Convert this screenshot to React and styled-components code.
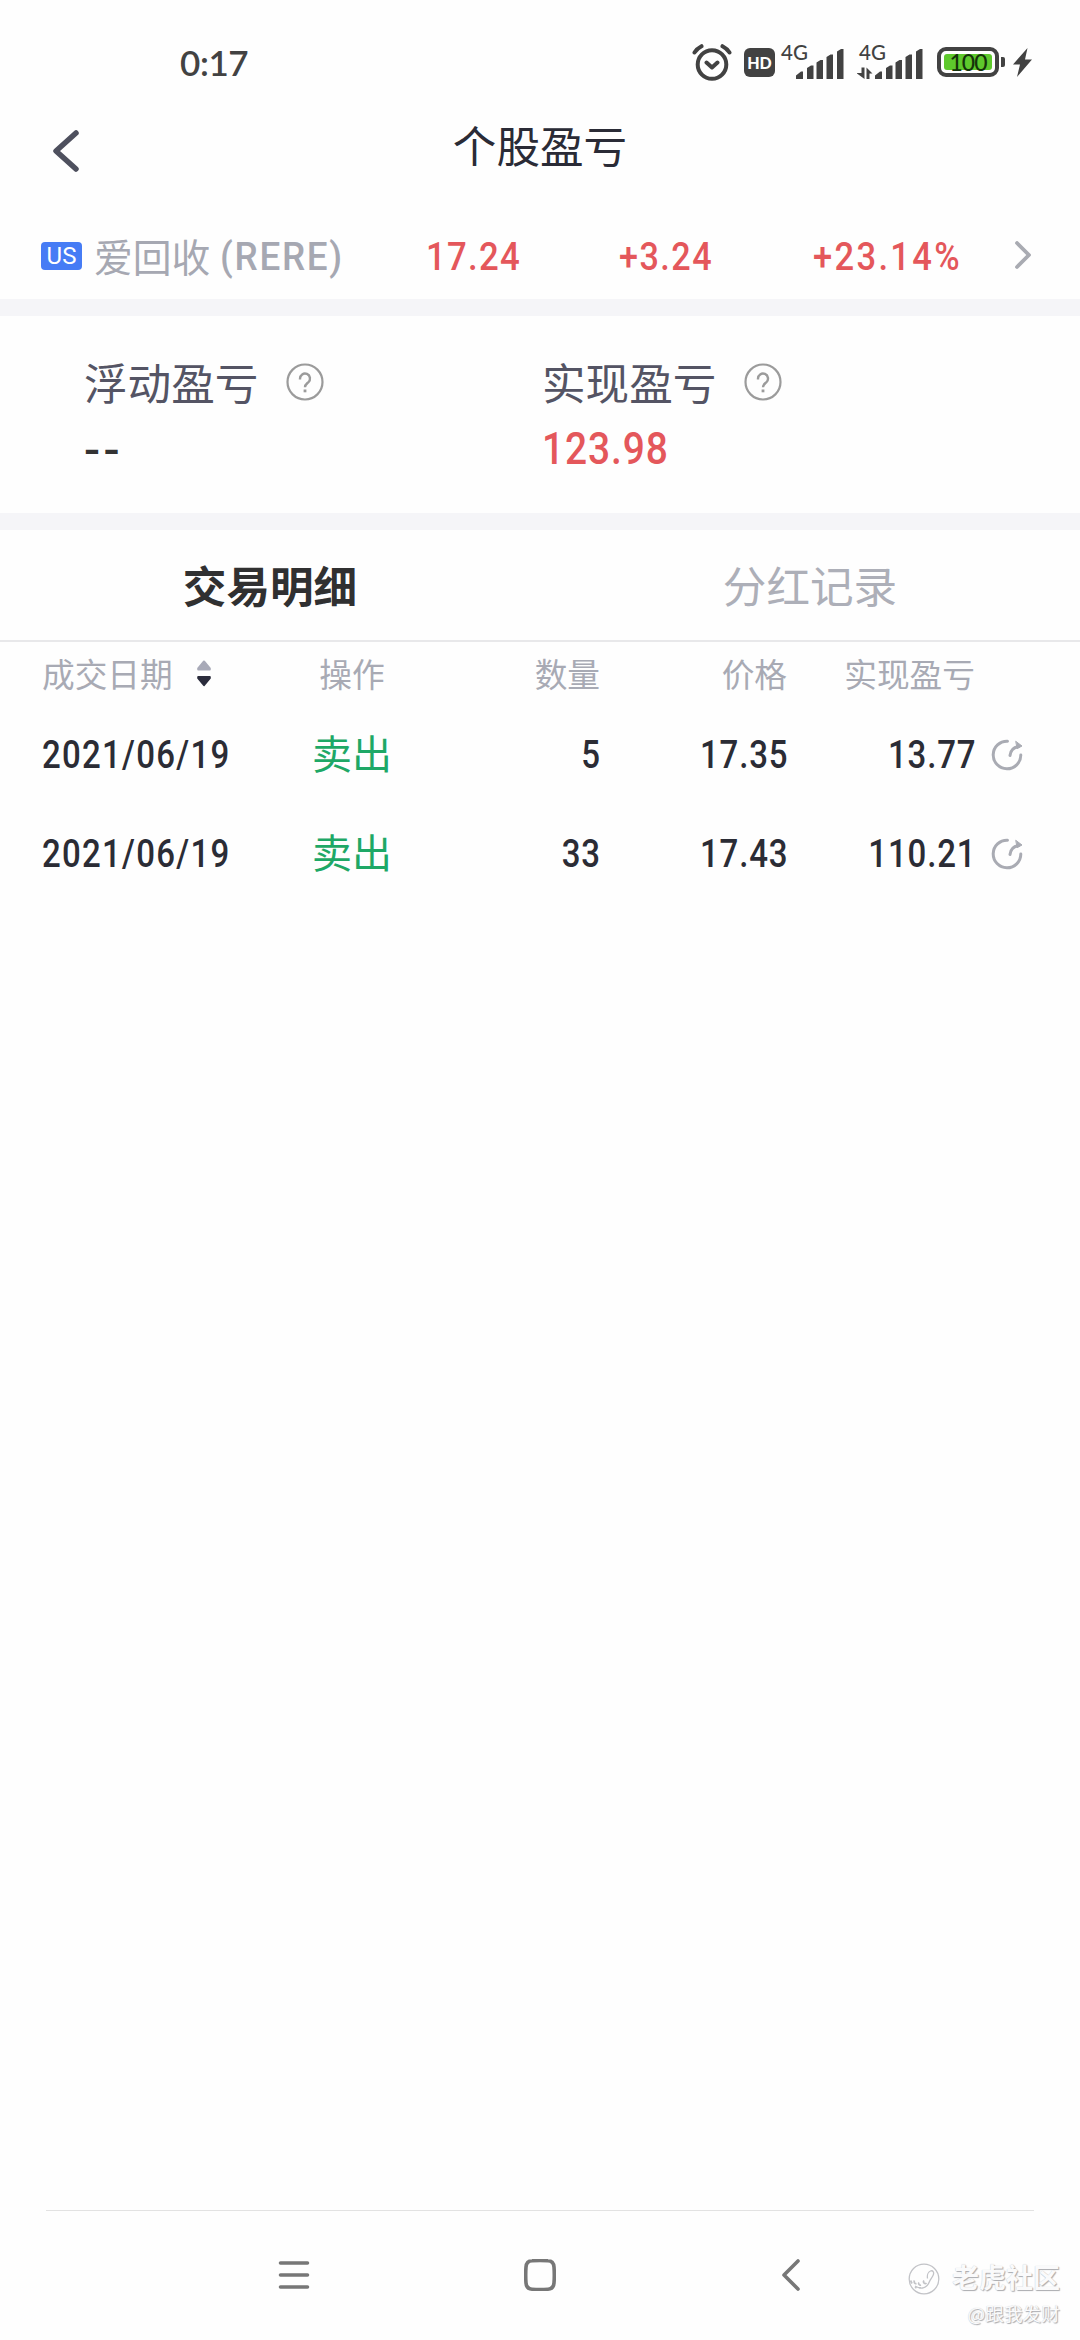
import React from "react";
import styled, { createGlobalStyle } from "styled-components";

const CJK = `"Noto Sans CJK SC", sans-serif`;
const NUM = `Roboto, "Noto Sans CJK SC", sans-serif`;

const Global = createGlobalStyle`
  * { box-sizing: border-box; }
  body { margin: 0; background: #fefefe; font-family: ${CJK}; }
  svg { display: block; flex: none; }
`;

const Screen = styled.div`
  position: relative;
  width: 1080px;
  height: 2340px;
  display: flex;
  flex-direction: column;
  background: #fefefe;
  overflow: hidden;
  white-space: nowrap;
`;

const StatusBar = styled.div`
  height: 124px;
  padding: 0 48px 0 180px;
  display: flex;
  justify-content: space-between;
  align-items: center;
  color: #424242;
`;

const Clock = styled.span`
  font: 600 35px/40px Lato, sans-serif;
  letter-spacing: -0.4px;
`;

const StatusIcons = styled.div`
  display: flex;
  align-items: center;
`;

const Gap = styled.span`
  flex: none;
  width: ${(p) => p.$w}px;
`;

const HdBadge = styled.span`
  width: 31px;
  height: 29px;
  border-radius: 6px;
  background: #424242;
  color: #fff;
  font: 900 16px/30px Lato, sans-serif;
  text-align: center;
`;

const Cell4G = styled.div`
  width: ${(p) => p.$w}px;
  height: 35px;
  display: grid;

  > * { grid-area: 1 / 1; }
`;

const NetLabel = styled.span`
  padding-left: ${(p) => p.$x}px;
  font: 500 20.5px/14px Lato, sans-serif;
`;

const Bars = styled.svg`
  align-self: end;
  justify-self: end;
`;

const Battery = styled.span`
  width: 62px;
  height: 30px;
  padding: 3px;
  border: 4px solid #424242;
  border-radius: 9px;
  display: flex;
`;

const Charge = styled.span`
  flex: 1;
  border-radius: 3px;
  background: #5ec92c;
  color: #15330a;
  font: 500 23px/17px Lato, sans-serif;
  text-align: center;
  letter-spacing: -1px;
`;

const Nub = styled.span`
  width: 4px;
  height: 10px;
  margin-left: 2px;
  border-radius: 0 2px 2px 0;
  background: #424242;
`;

const TitleBar = styled.header`
  height: 90px;
  padding: 0 52px;
  display: grid;
  grid-template-columns: 1fr auto 1fr;
  align-items: start;
`;

const BackButton = styled.span`
  padding-top: 5px;
`;

const Title = styled.h1`
  margin: 0;
  font-size: 43.6px;
  line-height: 40px;
  font-weight: 400;
  color: #2a2b36;
`;

const QuoteRow = styled.section`
  height: 85px;
  padding: 0 0 2px 41px;
  display: flex;
  align-items: center;
`;

const Market = styled.span`
  flex: none;
  width: 41px;
  height: 28px;
  border-radius: 4px;
  background: #467cf5;
  color: #fff;
  font: 400 24px/29px Roboto, sans-serif;
  text-align: center;
`;

const StockName = styled.span`
  flex: none;
  width: 344px;
  padding: 3px 0 0 12px;
  display: flex;
  align-items: center;
  font-size: 38.8px;
  line-height: 40px;
  color: #a6a8b2;
`;

const StockTitle = styled.span`
  margin-top: -5px;
`;

const Num = styled.span`
  display: inline-block;
  font-family: ${NUM};
  font-weight: 500;
  font-size: ${(p) => p.$size || 38.6}px;
  line-height: 44px;
  letter-spacing: ${(p) => p.$track ?? 1}px;
  margin-right: ${(p) => -(p.$track ?? 1)}px;
  transform: scaleX(${(p) => p.$sx || 0.855});
  transform-origin: ${(p) => (p.$right ? "right" : "left")} center;
  color: ${(p) => p.$color || "#2b2c35"};
`;

const QuoteValue = styled.span`
  flex: none;
  width: ${(p) => p.$w}px;
  padding-top: 3px;
`;

const Band = styled.div`
  flex: none;
  height: 17px;
  background: #f5f5f8;
`;

const Summary = styled.section`
  height: 197px;
  padding: 44px 0 0 84px;
  display: grid;
  grid-template-columns: 458px 1fr;
`;

const SummaryLabel = styled.div`
  height: 44px;
  display: flex;
  align-items: center;
  gap: 28px;
  font-size: 43.6px;
  line-height: 40px;
  color: #545464;

  svg { margin-top: -1px; }
`;

const LabelText = styled.span`
  margin-top: -2px;
`;

const SummaryValue = styled.div`
  margin-top: ${(p) => p.$top || 23}px;
`;

const Tabs = styled.nav`
  height: 112px;
  display: grid;
  grid-template-columns: 1fr 1fr;
  border-bottom: 2px solid #e8e8ea;
`;

const Tab = styled.span`
  padding-top: 32px;
  text-align: center;
  font-size: 43.6px;
  line-height: 44px;
  font-weight: ${(p) => (p.$active ? 700 : 400)};
  color: ${(p) => (p.$active ? "#303031" : "#adafb8")};
`;

const TableRow = styled.div`
  height: ${(p) => (p.$head ? 63 : 99)}px;
  padding-left: 42px;
  display: grid;
  grid-template-columns: 230px 160px 168px 187px 188px 1fr;
  align-items: center;
  ${(p) => p.$head && "font-size: 32.7px; line-height: 36px; color: #a8aab4; padding-bottom: 2px;"}
`;

const Cell = styled.span`
  display: flex;
  align-items: center;
  justify-content: ${(p) => p.$align || "flex-start"};
  gap: ${(p) => p.$gap || 0}px;
`;

const Action = styled.span`
  font-size: 40px;
  line-height: 44px;
  color: #1ea866;
  margin-top: -5px;
`;

const SortBox = styled.span`
  padding-top: 1px;
`;

const Spacer = styled.div`
  flex: 1;
`;

const NavBar = styled.footer`
  height: 130px;
  margin: 0 46px;
  border-top: 1px solid #e2e2e2;
  padding: 48px 0 0 232px;
  display: flex;
  align-items: flex-start;
`;

const Watermark = styled.div`
  position: absolute;
  right: 20px;
  bottom: 16px;
  display: flex;
  flex-direction: column;
  align-items: flex-end;
  color: #fafafb;
  text-shadow: 1px 1px 1px #a9aaae, 0 0 1px #c4c5c8;
`;

const Brand = styled.div`
  display: flex;
  align-items: center;
  gap: 12px;
  font-size: 27px;
  line-height: 30px;
  font-weight: 700;
`;

const BrandName = styled.span`
  margin-top: -5px;
`;

const Handle = styled.div`
  margin-top: 7px;
  font-size: 18.7px;
  line-height: 22px;
`;

const dark = "#424242";

const AlarmIcon = () => (
  <svg width="40" height="38" viewBox="0 0 40 38" fill="none" stroke={dark} strokeWidth="4" strokeLinecap="round" strokeLinejoin="round">
    <circle cx="20" cy="21.5" r="14.3" />
    <path d="M14.5 19.5l5.5 5 5.5-5M2.5 9.5Q5 5.500 9.500 3.200M37.500 9.500Q35 5.500 30.500 3.200" />
  </svg>
);

const SignalBars = ({ data }) => (
  <Bars width={data ? 66 : 48} height="32" viewBox={data ? "-18 0 66 32" : "0 0 48 32"} fill={dark}>
    <path d="M0 31v-3.500l5-4h2v7.500zM11 31V20l4-2.500h2.500V31zM20.500 31V14.500l4-2.500H27v19zM30.500 31V9l4-2.500H37V31zM41 31V3.500L45 1h2.500v30z" />
    {data && <path d="M-13.500 19.500h3V31L-18.500 25h5zM-8.500 31V19.500L-2.500 25.500h-3V31z" />}
  </Bars>
);

const BoltIcon = () => (
  <svg width="19" height="29" viewBox="0 0 19 29" fill={dark}>
    <path d="M14.500 0L0 16.500h7L4 29l15-17.500h-7z" />
  </svg>
);

const HelpIcon = () => (
  <svg width="38" height="38" viewBox="0 0 38 38" fill="none" stroke="#9b9b9b" strokeWidth="2.200">
    <circle cx="19" cy="19" r="17.500" />
    <path d="M14 16.500v-.8a5 5 0 1 1 8.300 3.600c-1.900 1.700-3.300 2.400-3.300 5" strokeWidth="2.400" />
    <path d="M19 26.500v2.800" strokeWidth="2.800" />
  </svg>
);

const SortIcon = () => (
  <svg width="14" height="27" viewBox="0 0 14 27" strokeWidth="2" strokeLinejoin="round">
    <path d="M1.200 9.500V8.500L7 1.500l5.800 7v1z" fill="#a8aab8" stroke="#a8aab8" />
    <path d="M1.200 17v1.200L7 25.200l5.800-7V17z" fill="#2b2c3c" stroke="#2b2c3c" />
  </svg>
);

const ShareIcon = () => (
  <svg width="32" height="32" viewBox="0 0 32 32" fill="none" stroke="#a9abb3" strokeWidth="3" strokeLinecap="round">
    <path d="M16.500 2.200A13.800 13.800 0 1 0 29.800 16" />
    <path d="M19 16.500C19.500 11.500 22 8.500 27.500 7.500" />
    <path d="M25 2.500L31 7l-4.500 2.500z" fill="#a9abb3" strokeWidth="1" />
  </svg>
);

const PawIcon = () => (
  <svg width="32" height="32" viewBox="0 0 32 32" fill="none" stroke="#c2c3c7" strokeWidth="1.300">
    <circle cx="16" cy="16" r="14.800" />
    <path d="M19.500 15.500c-.5-3 .5-6.500 3-7.500s4 1.500 2.500 4.500-2.500 3.500-3.500 6-3.500 6-7 6.500-5.500-1-7.500-2" />
    <path d="M2.500 17.500l1.500 3M6.500 17.500c-1 2 .5 3.500 2 3M11 19.500c-1 1.500.5 3 2 2.500M16 17.500c-1.500 2 1 4 2.500 2.500M7 24l1.500 1M12 24v1.500" strokeWidth="1.700" />
  </svg>
);

const red = "#e4575b";

const trades = [
  { date: "2021/06/19", qty: "5", price: "17.35", pnl: "13.77" },
  { date: "2021/06/19", qty: "33", price: "17.43", pnl: "110.21" },
];

export default function App() {
  return (
    <Screen>
      <Global />
      <StatusBar>
        <Clock>0:17</Clock>
        <StatusIcons>
          <AlarmIcon />
          <Gap $w={12} />
          <HdBadge>HD</HdBadge>
          <Gap $w={6} />
          <Cell4G $w={63}>
            <NetLabel $x={0}>4G</NetLabel>
            <SignalBars />
          </Cell4G>
          <Gap $w={13} />
          <Cell4G $w={66}>
            <NetLabel $x={2}>4G</NetLabel>
            <SignalBars data />
          </Cell4G>
          <Gap $w={14} />
          <Battery>
            <Charge>100</Charge>
          </Battery>
          <Nub />
          <Gap $w={8} />
          <BoltIcon />
        </StatusIcons>
      </StatusBar>

      <TitleBar>
        <BackButton>
          <svg width="28" height="44" viewBox="0 0 28 44" fill="none" stroke="#4e505e" strokeWidth="5.500" strokeLinecap="round" strokeLinejoin="round">
            <path d="M24 4L4 22l20 18" />
          </svg>
        </BackButton>
        <Title>个股盈亏</Title>
      </TitleBar>

      <QuoteRow>
        <Market>US</Market>
        <StockName>
          <StockTitle>爱回收</StockTitle>
          <Gap $w={10} />
          <Num $color="#a6a8b2" $sx={0.955} $track={1.8}>(RERE)</Num>
        </StockName>
        <QuoteValue $w={193}><Num $color={red} $sx={0.9} $track={1.4}>17.24</Num></QuoteValue>
        <QuoteValue $w={194}><Num $color={red} $sx={0.885} $track={1.7}>+3.24</Num></QuoteValue>
        <QuoteValue $w={200}><Num $color={red} $sx={0.895} $track={2.6}>+23.14%</Num></QuoteValue>
        <svg width="18" height="29" viewBox="0 0 18 29" fill="none" stroke="#a9abb2" strokeWidth="3.800" strokeLinecap="round" strokeLinejoin="round">
          <path d="M4 2l12 12-12 12" />
        </svg>
      </QuoteRow>
      <Band />

      <Summary>
        <div>
          <SummaryLabel><LabelText>浮动盈亏</LabelText><HelpIcon /></SummaryLabel>
          <SummaryValue $top={24}><Num $size={44} $color="#333" $sx={1.08} $track={3}>--</Num></SummaryValue>
        </div>
        <div>
          <SummaryLabel><LabelText>实现盈亏</LabelText><HelpIcon /></SummaryLabel>
          <SummaryValue><Num $size={44.5} $color={red} $sx={0.875}>123.98</Num></SummaryValue>
        </div>
      </Summary>
      <Band />

      <Tabs>
        <Tab $active>交易明细</Tab>
        <Tab>分红记录</Tab>
      </Tabs>

      <TableRow $head>
        <Cell $gap={24}>成交日期<SortBox><SortIcon /></SortBox></Cell>
        <Cell $align="center">操作</Cell>
        <Cell $align="flex-end">数量</Cell>
        <Cell $align="flex-end">价格</Cell>
        <Cell $align="flex-end">实现盈亏</Cell>
      </TableRow>
      {trades.map((t) => (
        <TableRow key={t.pnl}>
          <Cell><Num $track={1.5}>{t.date}</Num></Cell>
          <Cell $align="center"><Action>卖出</Action></Cell>
          <Cell $align="flex-end"><Num $right>{t.qty}</Num></Cell>
          <Cell $align="flex-end"><Num $right>{t.price}</Num></Cell>
          <Cell $align="flex-end"><Num $right>{t.pnl}</Num></Cell>
          <Cell><Gap $w={15.5} /><ShareIcon /></Cell>
        </TableRow>
      ))}

      <Spacer />
      <NavBar>
        <svg width="32" height="32" viewBox="0 0 32 32" fill="none" stroke="#777" strokeWidth="3.600" strokeLinecap="round">
          <path d="M2.500 4h27M2.500 16h27M2.500 28h27" />
        </svg>
        <Gap $w={214} />
        <svg width="32" height="32" viewBox="0 0 32 32" fill="none" stroke="#777" strokeWidth="3.600">
          <path d="M8 1.800Q16 1.300 24 1.800Q29.500 2 30 8Q30.600 16 30 24Q29.500 30 24 30.200Q16 30.700 8 30.200Q2.500 30 2 24Q1.400 16 2 8Q2.500 2 8 1.800z" />
        </svg>
        <Gap $w={224.5} />
        <svg width="20" height="32" viewBox="0 0 20 32" fill="none" stroke="#777" strokeWidth="3.600" strokeLinecap="round" strokeLinejoin="round">
          <path d="M17 2L3 16l14 14" />
        </svg>
      </NavBar>

      <Watermark>
        <Brand><PawIcon /><BrandName>老虎社区</BrandName></Brand>
        <Handle>@跟我发财</Handle>
      </Watermark>
    </Screen>
  );
}
